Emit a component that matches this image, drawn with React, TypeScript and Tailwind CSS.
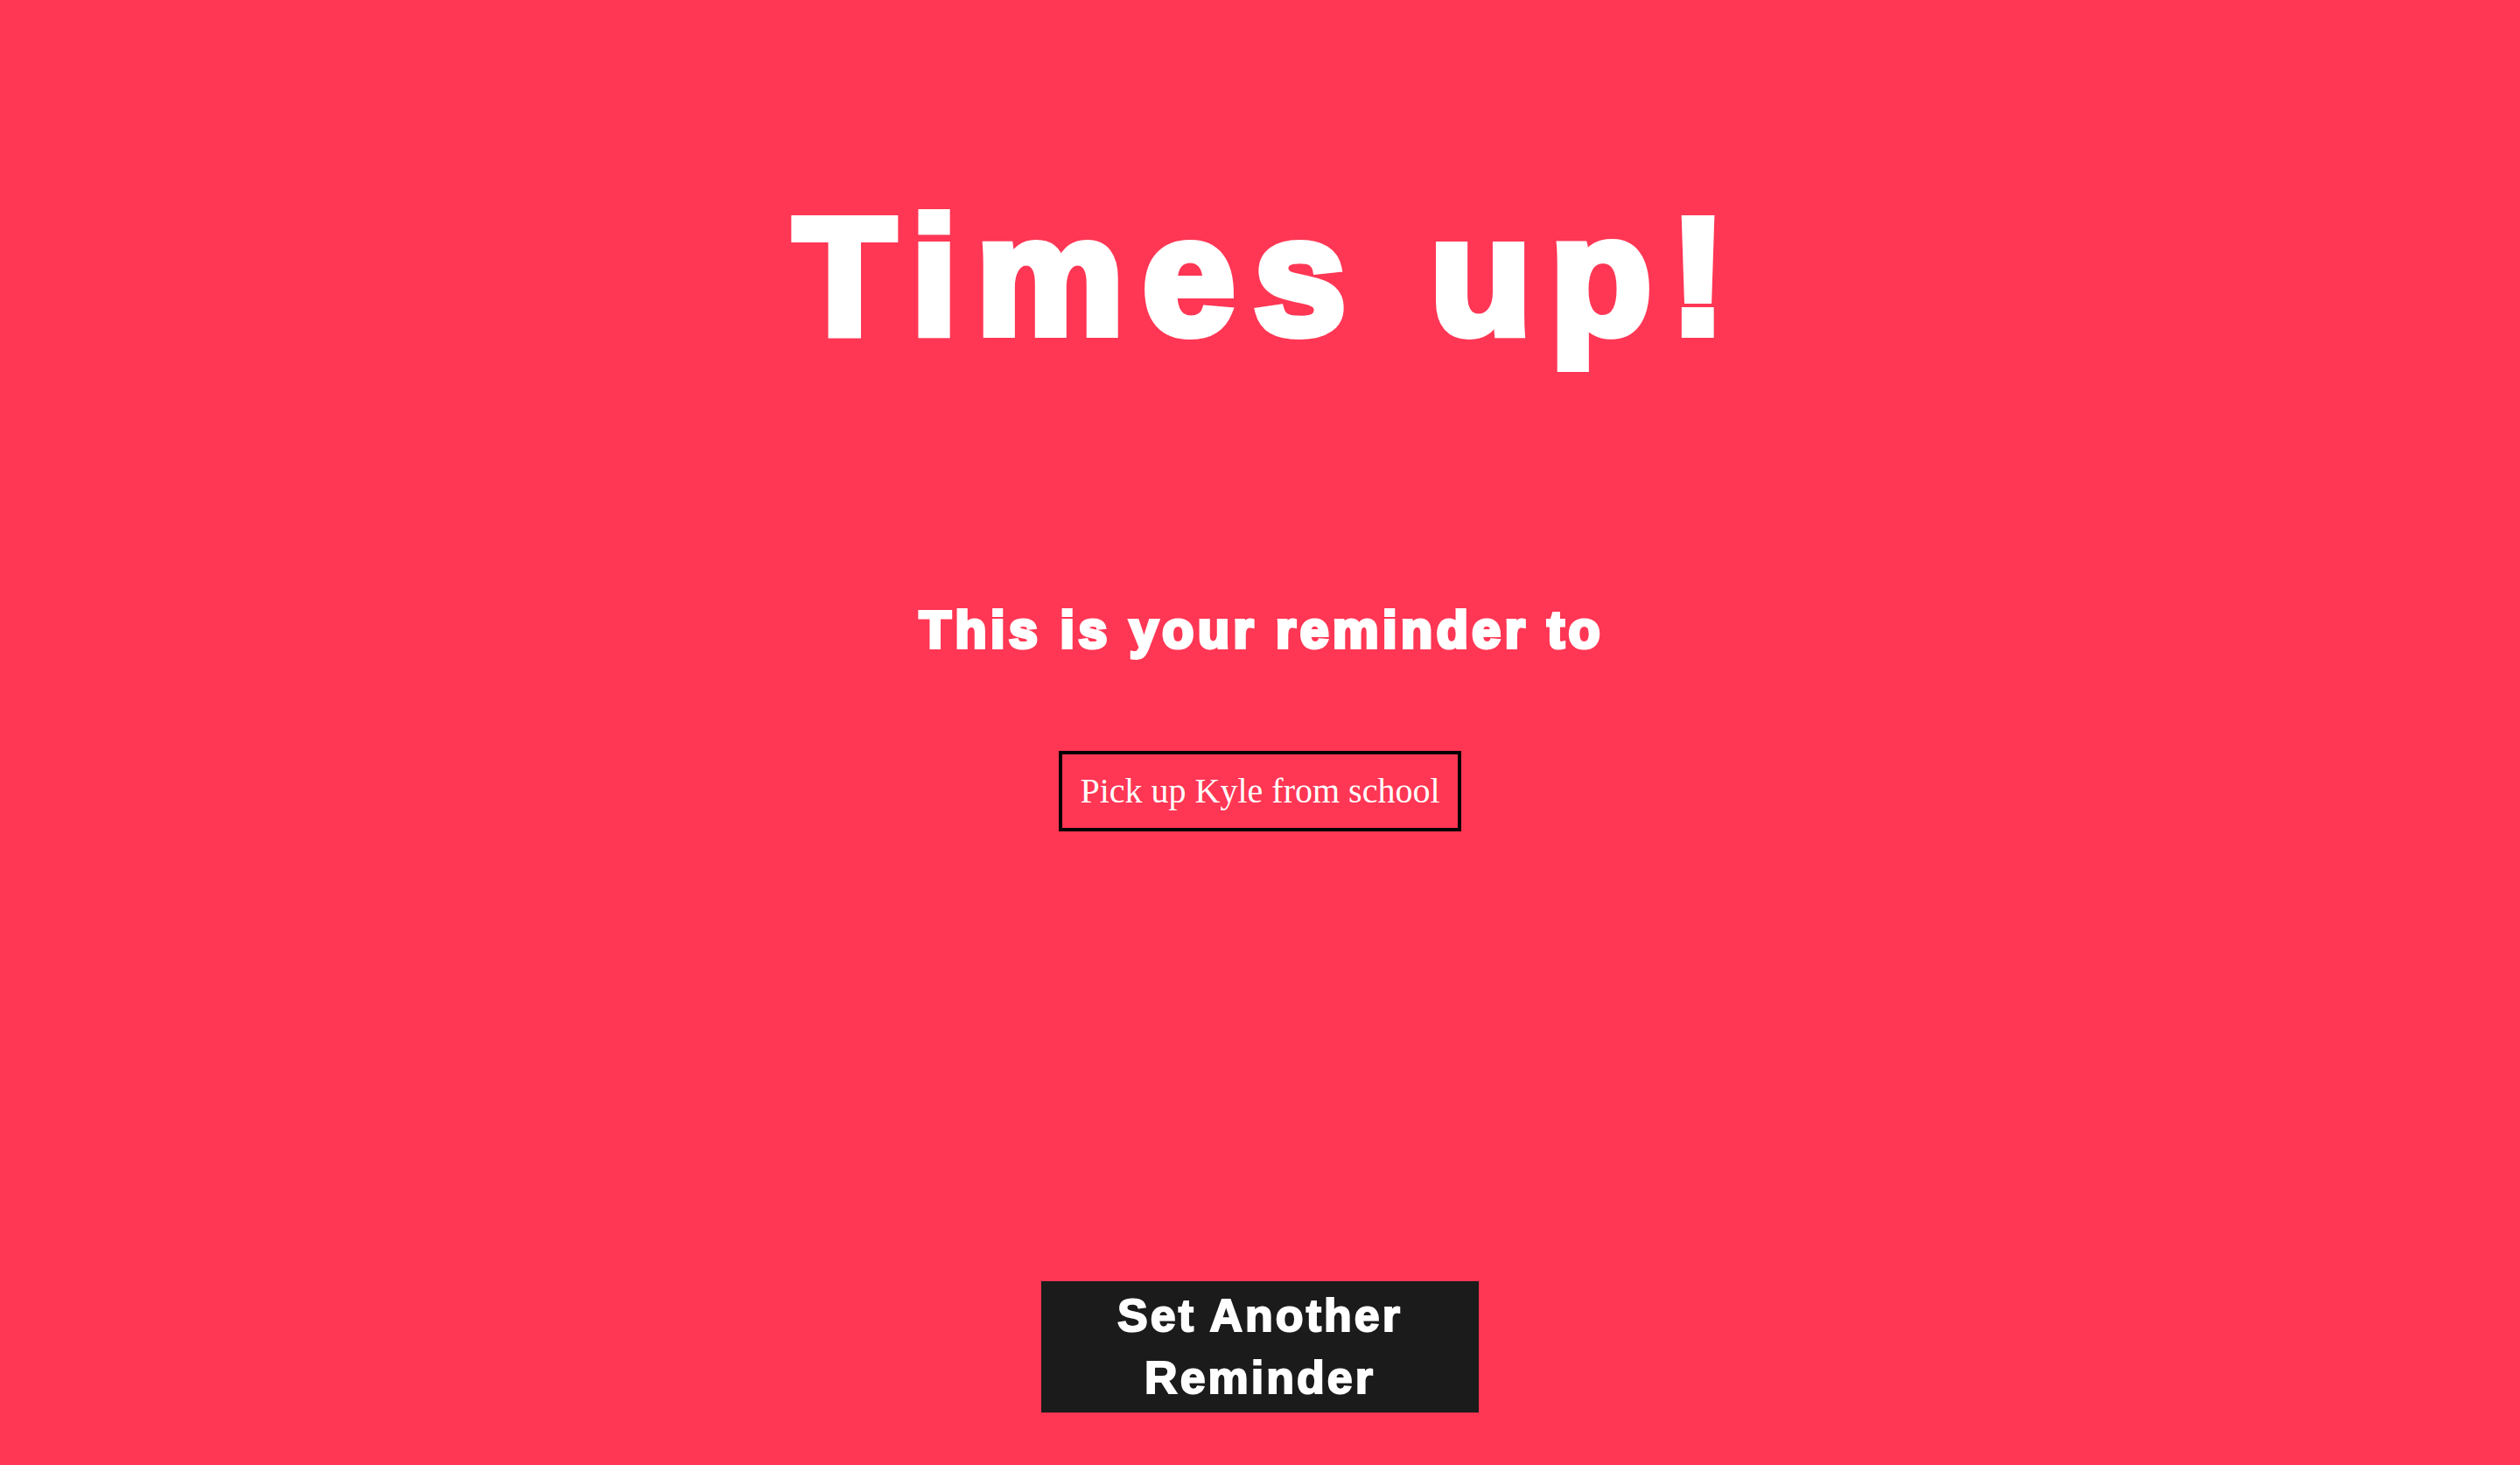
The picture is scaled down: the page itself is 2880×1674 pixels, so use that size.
export default function App() {
  return (
    <div className="min-h-screen w-full bg-[#ff3654] flex flex-col items-center text-white font-['Liberation_Sans',Arial,sans-serif]">
      {/* Title */}
      <h1 className="mt-[215px] pl-[21px] text-[190px] leading-[200px] font-bold tracking-[21.4px] [-webkit-text-stroke:10px_white]">
        Times up!
      </h1>

      {/* Subtitle */}
      <h2 className="mt-[270px] pl-[4px] text-[59px] leading-[70px] font-bold tracking-[4.6px] [-webkit-text-stroke:4px_white]">
        This is your reminder to
      </h2>

      {/* Reminder text */}
      <div className="mt-[103px] border-4 border-black px-[20px] py-[19px] font-['Liberation_Serif','Times_New_Roman',serif] text-[40px] leading-[46px]">
        Pick up Kyle from school
      </div>

      {/* Button */}
      <button className="mt-auto mb-[60px] w-[500px] h-[150px] bg-[#1b1b1b] px-6 pt-[4px] pb-[4px] text-[52px] leading-[71px] font-bold tracking-[3px] text-white [-webkit-text-stroke:2px_white]">
        Set Another Reminder
      </button>
    </div>
  );
}
